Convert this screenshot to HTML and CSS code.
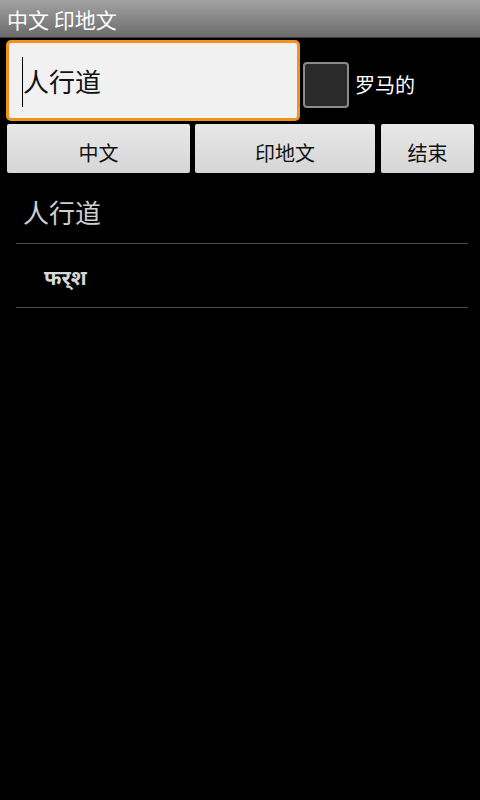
FILE: index.html
```html
<!DOCTYPE html>
<html>
<head>
<meta charset="utf-8">
<link rel="stylesheet" href="styles.css">
</head>
<body>
<div class="titlebar">中文 印地文</div>
<div class="toprow">
  <div class="edit"><span class="cursor"></span><span class="edit-text">人行道</span></div>
  <div class="check"><span class="box"></span><span class="check-label">罗马的</span></div>
</div>
<div class="btnrow">
  <div class="btn b1">中文</div>
  <div class="btn b2">印地文</div>
  <div class="btn b3">结束</div>
</div>
<div class="list">
  <div class="item item-zh">人行道</div>
  <div class="item item-hi">फर्&zwnj;श</div>
</div>
</body>
</html>
```
FILE: styles.css
```css
html, body {
  margin: 0;
  padding: 0;
  background: #000;
  width: 480px;
  height: 800px;
  overflow: hidden;
  font-family: "Noto Sans CJK SC", "Noto Sans", "Noto Sans Devanagari", sans-serif;
}
.titlebar {
  height: 38px;
  background: linear-gradient(#a3a3a3, #6b6b6b);
  color: #fff;
  font-size: 21px;
  line-height: 38px;
  padding-left: 7px;
  box-sizing: border-box;
  border-bottom: 1px solid #3a3a3a;
}
.toprow {
  display: flex;
  align-items: center;
  padding: 2px 0 0 6px;
}
.edit {
  width: 294px;
  height: 81px;
  box-sizing: border-box;
  border: 3px solid #f0921e;
  border-radius: 5px;
  background: #f1f1f1;
  display: flex;
  align-items: center;
  padding-left: 13px;
}
.cursor {
  width: 1px;
  height: 50px;
  background: #000;
  margin-top: 2px;
}
.edit-text {
  font-size: 26px;
  color: #111;
}
.check {
  display: flex;
  align-items: center;
  margin-left: 3px;
  margin-top: 8px;
}
.box {
  width: 46px;
  height: 46px;
  box-sizing: border-box;
  border: 2px solid #8a8a8a;
  border-radius: 4px;
  background: #2a2a2a;
}
.check-label {
  color: #fff;
  font-size: 20px;
  margin-left: 6px;
}
.btnrow {
  display: flex;
  padding: 3px 6px 0 7px;
  gap: 5px;
}
.btn {
  height: 49px;
  background: linear-gradient(#e8e8e8, #d6d6d6);
  border-radius: 2px;
  color: #111;
  font-size: 20px;
  display: flex;
  align-items: center;
  justify-content: center;
  padding-top: 8px;
  box-sizing: border-box;
}
.b1 { width: 183px; }
.b2 { width: 180px; }
.b3 { width: 93px; margin-left: 1px; }
.list {
  margin: 7px 12px 0 16px;
}
.item {
  height: 63px;
  border-bottom: 1px solid #4a4a4a;
  display: flex;
  align-items: center;
}
.item-zh {
  font-size: 26px;
  color: #cfcfcf;
  padding-left: 7px;
}
.item-hi {
  font-size: 21px;
  font-weight: bold;
  color: #d8d8d8;
  padding-left: 28px;
}
```
